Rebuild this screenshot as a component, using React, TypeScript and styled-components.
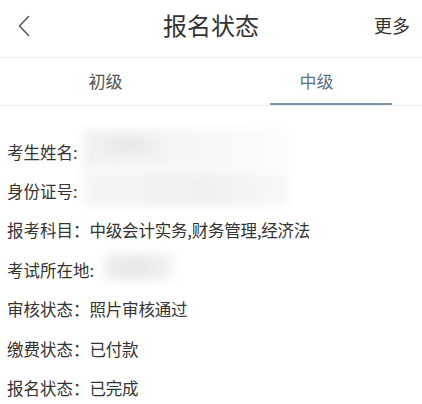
import React from 'react';
import styled, { createGlobalStyle } from 'styled-components';

const Global = createGlobalStyle`
  html, body { margin: 0; padding: 0; background: #fff; }
  body { font-family: "Noto Sans CJK SC", "Noto Sans", sans-serif; color: #333; }
`;

const Header = styled.div`
  height: 58px;
  display: flex;
  align-items: center;
  justify-content: space-between;
  padding: 0 12px 0 18px;
  border-bottom: 1px solid #eeeeee;
  box-sizing: border-box;
  position: relative;
`;

const Back = styled.button`
  border: 0;
  background: none;
  padding: 0;
  width: 20px;
  height: 24px;
  display: flex;
  align-items: center;
  margin-top: -6px;
`;

const Title = styled.div`
  position: absolute;
  left: 0;
  right: 0;
  top: 0;
  height: 50px;
  line-height: 50px;
  text-align: center;
  font-size: 24px;
  color: #333;
  pointer-events: none;
`;

const More = styled.div`
  font-size: 18px;
  color: #333;
  margin-top: -8px;
`;

const Tabs = styled.div`
  display: flex;
  height: 47px;
  border-bottom: 1px solid #eeeeee;
`;

const Tab = styled.div<{ $active?: boolean }>`
  flex: 1;
  display: flex;
  justify-content: center;
  align-items: flex-start;
  padding-top: 10px;
  font-size: 17px;
  color: ${p => (p.$active ? '#5a7289' : '#555')};
  position: relative;
  &::after {
    content: '';
    display: ${p => (p.$active ? 'block' : 'none')};
    position: absolute;
    left: 59px;
    right: 30px;
    bottom: 0px;
    height: 2px;
    background: #7d93a8;
  }
`;

const List = styled.div`
  display: flex;
  flex-direction: column;
  padding: 26px 0 0 7px;
`;

const Row = styled.div`
  height: 39.4px;
  display: flex;
  align-items: center;
  font-size: 16.5px;
  color: #333;
`;

const Label = styled.span`
  white-space: nowrap;
`;

const Value = styled.span<{ $gap?: number }>`
  margin-left: ${p => p.$gap ?? 0}px;
  white-space: nowrap;
  letter-spacing: -0.2px;
`;

const Blurred = styled.span<{ $w: number; $h: number; $tone: string }>`
  display: inline-block;
  width: ${p => p.$w}px;
  height: ${p => p.$h}px;
  background: ${p => p.$tone};
  filter: blur(5px);
`;

const Chevron = () => (
  <svg width="12" height="22" viewBox="0 0 12 22">
    <path d="M10.5 1.5 L1.5 11 L10.5 20.5" fill="none" stroke="#555" strokeWidth="1.5" strokeLinecap="round" strokeLinejoin="round" />
  </svg>
);

type Item = { label: string; value?: string; blur?: { w: number; h: number; tone: string; gap: number } };

const rows: Item[] = [
  { label: '考生姓名:', blur: { w: 206, h: 40, tone: 'radial-gradient(ellipse 45px 16px at 22% 40%, #e6e6e6, transparent), linear-gradient(90deg,#f2f2f2,#f7f7f7 60%,#fcfcfc)', gap: 5 } },
  { label: '身份证号:', blur: { w: 206, h: 34, tone: 'linear-gradient(90deg,#f5f5f5,#f0f0f0 60%,#f8f8f8)', gap: 5 } },
  { label: '报考科目：', value: '中级会计实务,财务管理,经济法' },
  { label: '考试所在地:', blur: { w: 68, h: 26, tone: 'linear-gradient(90deg,#eeeeee,#e8e8e8 50%,#f3f3f3)', gap: 11 } },
  { label: '审核状态：', value: '照片审核通过' },
  { label: '缴费状态：', value: '已付款' },
  { label: '报名状态：', value: '已完成' },
];

export default function App() {
  return (
    <>
      <Global />
      <Header>
        <Back aria-label="返回"><Chevron /></Back>
        <Title>报名状态</Title>
        <More>更多</More>
      </Header>
      <Tabs>
        <Tab>初级</Tab>
        <Tab $active>中级</Tab>
      </Tabs>
      <List>
        {rows.map(r => (
          <Row key={r.label}>
            <Label>{r.label}</Label>
            {r.value && <Value>{r.value}</Value>}
            {r.blur && (
              <Value $gap={r.blur.gap}>
                <Blurred $w={r.blur.w} $h={r.blur.h} $tone={r.blur.tone} />
              </Value>
            )}
          </Row>
        ))}
      </List>
    </>
  );
}
